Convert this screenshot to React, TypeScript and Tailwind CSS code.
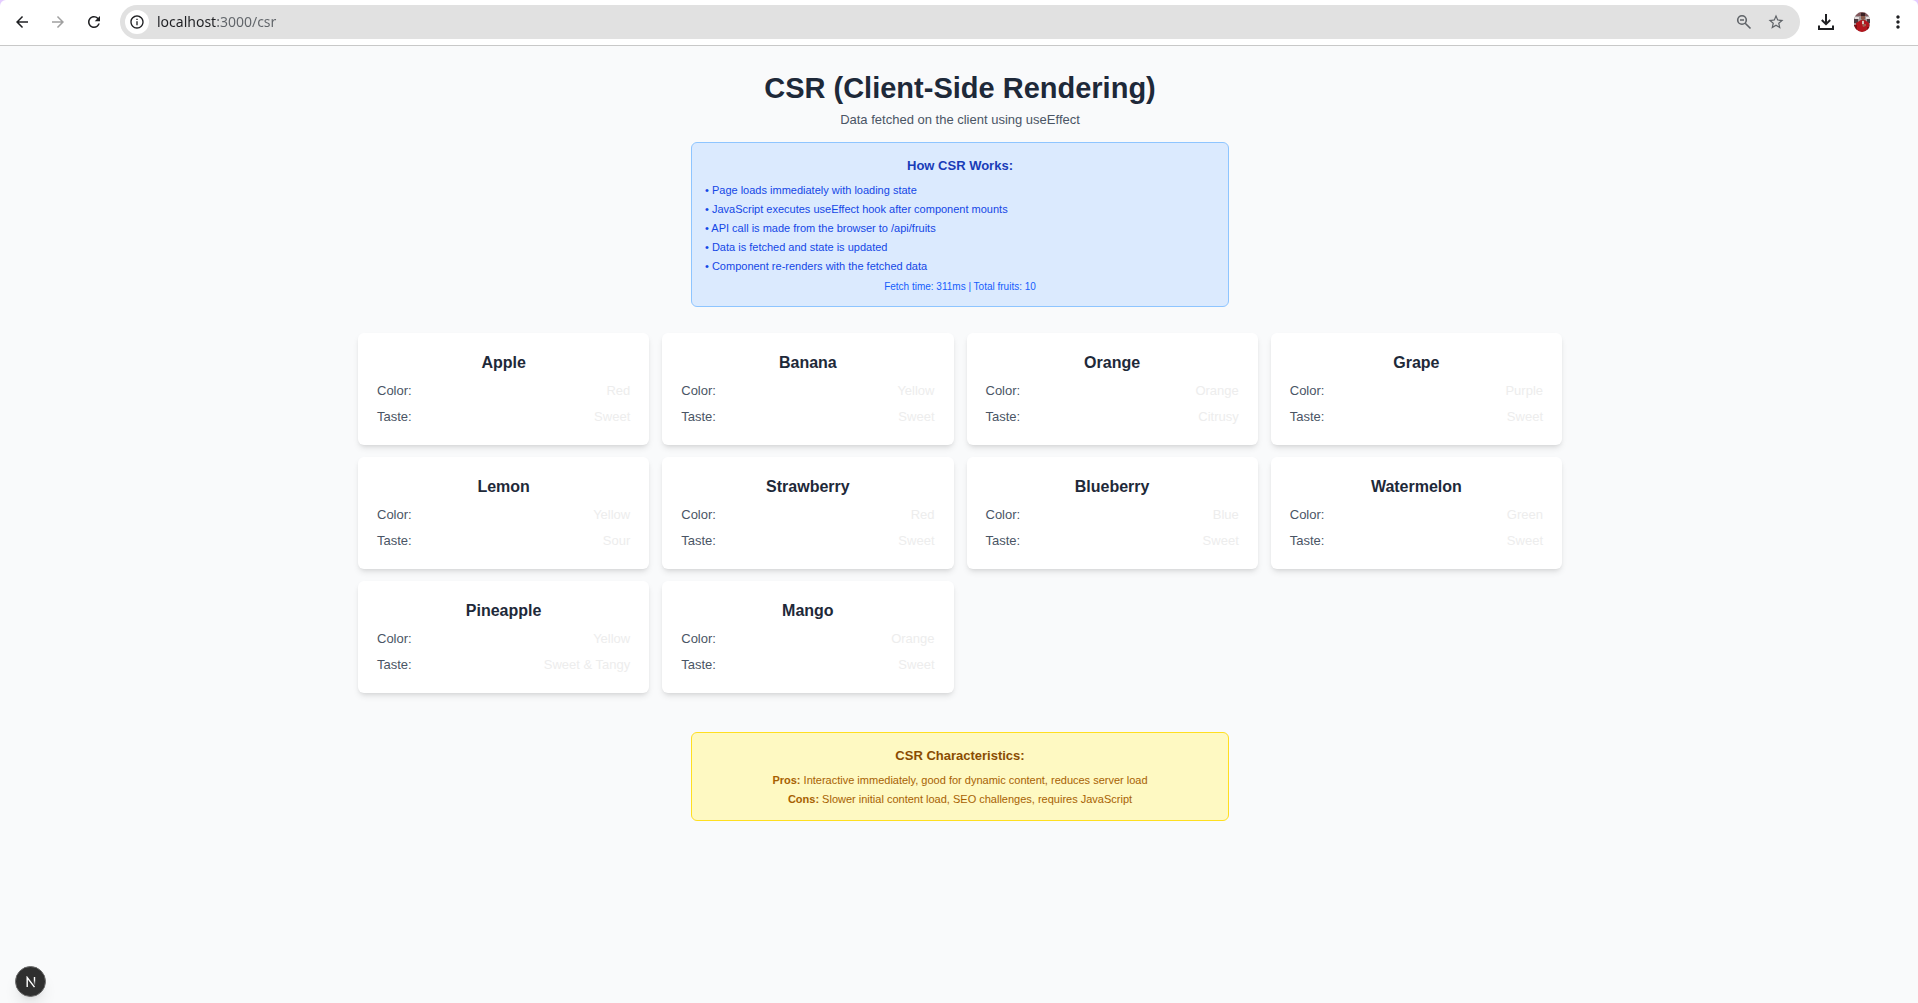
import { useState } from "react";
import {
  MdArrowBack,
  MdArrowForward,
  MdInfoOutline,
  MdMoreVert,
  MdRefresh,
  MdStarBorder,
} from "react-icons/md";

const fruits = [
  { name: "Apple", color: "Red", taste: "Sweet" },
  { name: "Banana", color: "Yellow", taste: "Sweet" },
  { name: "Orange", color: "Orange", taste: "Citrusy" },
  { name: "Grape", color: "Purple", taste: "Sweet" },
  { name: "Lemon", color: "Yellow", taste: "Sour" },
  { name: "Strawberry", color: "Red", taste: "Sweet" },
  { name: "Blueberry", color: "Blue", taste: "Sweet" },
  { name: "Watermelon", color: "Green", taste: "Sweet" },
  { name: "Pineapple", color: "Yellow", taste: "Sweet & Tangy" },
  { name: "Mango", color: "Orange", taste: "Sweet" },
];

const steps = [
  "Page loads immediately with loading state",
  "JavaScript executes useEffect hook after component mounts",
  "API call is made from the browser to /api/fruits",
  "Data is fetched and state is updated",
  "Component re-renders with the fetched data",
];

function ZoomOutIcon() {
  return (
    <svg viewBox="0 0 16 16" className="size-4" fill="none" stroke="currentColor" strokeWidth="1.6" aria-hidden="true">
      <circle cx="6" cy="6" r="4.3" />
      <path d="M9.2 9.2 14.5 14.5M4 6h4" />
    </svg>
  );
}

function DownloadIcon() {
  return (
    <svg viewBox="0 0 16 16" className="size-4" fill="none" stroke="currentColor" strokeWidth="2" aria-hidden="true">
      <path d="M8 0v10M3.8 6 8 10.2 12.2 6M1 11.500V15h14v-3.500" />
    </svg>
  );
}

function Avatar() {
  return (
    <svg viewBox="0 0 16 20" className="h-5 w-4" aria-hidden="true">
      <defs>
        <clipPath id="avatar-clip">
          <ellipse cx="8" cy="10" rx="8.4" ry="10" />
        </clipPath>
      </defs>
      <g clipPath="url(#avatar-clip)">
        <path fill="#a39a9c" d="M0 0h16v20H0z" />
        <path fill="#82565a" d="M0 0h16v4H0z" />
        <path fill="#4b3a40" d="M0 7h4v4H0zM13 7h3v4h-3z" />
        <path fill="#e4dcdc" d="M1 5h4v2H1zM12 5h4v2h-4z" />
        <path fill="#b3161d" d="M2 11l5-3h4l4 3 1 9H1z" />
        <path fill="#7c1016" d="M0 13h3v7H0zM13 15h3v5h-3z" />
        <path fill="#8d5a4b" d="M7 3h4v4l-2 2-2-2z" />
        <path fill="#3a2224" d="M7 1h4v3H7z" />
        <path fill="#d8c4bd" d="M8 9h2v3H8z" />
        <path fill="#a05d50" d="M8 12h4v2l-3 1z" />
      </g>
    </svg>
  );
}

function BrowserBar() {
  const [url, setUrl] = useState("localhost:3000/csr");
  return (
    <header className="bg-[#e4ccff]">
      <div className="flex h-[46px] items-center rounded-t-md border-b border-[#c8c8c8] bg-white pr-[10px] pb-[2px] pl-[13px] text-[#1f2023]">
        <nav className="flex items-center gap-[18px]" aria-label="Browser navigation">
          <button type="button" aria-label="Back"><MdArrowBack size={18} /></button>
          <button type="button" aria-label="Forward" className="text-[#a0a0a0]" disabled><MdArrowForward size={18} /></button>
          <button type="button" aria-label="Reload"><MdRefresh size={18} /></button>
        </nav>
        <div className="ml-[17px] flex h-[34px] flex-1 items-center rounded-full bg-[#e1e1e1] pr-[15px] pl-[5px]">
          <button type="button" aria-label="Site information" className="grid size-6 place-items-center rounded-full bg-white">
            <MdInfoOutline size={16} />
          </button>
          <input
            aria-label="Address"
            value={url}
            spellCheck={false}
            onChange={(e) => setUrl(e.target.value)}
            className="ml-2 h-6 min-w-0 flex-1 bg-[linear-gradient(to_right,#1f2023_59px,#5f6368_59px)] bg-clip-text font-['Noto_Sans',sans-serif] text-sm text-transparent caret-black outline-none"
          />
          <div className="flex items-center gap-[15px] text-[#5f6368]">
            <button type="button" aria-label="Zoom"><ZoomOutIcon /></button>
            <button type="button" aria-label="Bookmark this page"><MdStarBorder size={18} /></button>
          </div>
        </div>
        <div className="ml-[18px] flex items-center">
          <button type="button" aria-label="Downloads"><DownloadIcon /></button>
          <button type="button" aria-label="Profile" className="ml-5"><Avatar /></button>
          <button type="button" aria-label="Menu" className="ml-[18px]"><MdMoreVert size={20} /></button>
        </div>
      </div>
    </header>
  );
}

function FruitCard({ name, color, taste }: { name: string; color: string; taste: string }) {
  return (
    <article className="rounded-md bg-white p-[19px] text-[13px] leading-[19px] shadow-md">
      <h2 className="text-center text-base leading-[22px] font-bold text-gray-800">{name}</h2>
      <dl className="mt-[7px] flex flex-col gap-[7px] text-[#ededed]">
        <div className="flex justify-between">
          <dt className="text-gray-600">Color:</dt>
          <dd>{color}</dd>
        </div>
        <div className="flex justify-between">
          <dt className="text-gray-600">Taste:</dt>
          <dd>{taste}</dd>
        </div>
      </dl>
    </article>
  );
}

export default function App() {
  return (
    <div className="flex min-h-screen flex-col bg-gray-50 font-['Liberation_Sans',Arial,sans-serif]">
      <BrowserBar />
      <main className="mx-auto w-full max-w-[1232px] flex-1 py-[26px] pr-[13px] pl-[15px]">
        <div className="text-center">
          <h1 className="text-[29px] leading-8 font-bold text-gray-800">CSR (Client-Side Rendering)</h1>
          <p className="mt-[6px] text-[13px] leading-[19px] text-gray-600">Data fetched on the client using useEffect</p>
          <section className="mx-auto mt-[13px] max-w-[538px] rounded-md border border-blue-300 bg-blue-100 p-[13px]">
            <h2 className="text-[13px] leading-[19px] font-bold text-blue-800">How CSR Works:</h2>
            <ul className="mt-[7px] flex flex-col gap-[3px] text-left text-[11px] leading-4 text-blue-700">
              {steps.map((step) => (
                <li key={step}>• {step}</li>
              ))}
            </ul>
            <p className="mt-[6px] text-[10px] leading-[13px] text-blue-600">Fetch time: 311ms | Total fruits: 10</p>
          </section>
        </div>

        <div className="mt-[26px] grid grid-cols-1 gap-x-[13px] gap-y-3 sm:grid-cols-2 lg:grid-cols-4">
          {fruits.map((fruit) => (
            <FruitCard key={fruit.name} {...fruit} />
          ))}
        </div>

        <section className="mx-auto mt-[39px] max-w-[538px] rounded-md border border-yellow-300 bg-yellow-100 p-[13px] text-center">
          <h2 className="text-[13px] leading-[19px] font-bold text-yellow-800">CSR Characteristics:</h2>
          <div className="mt-[7px] flex flex-col gap-[3px] text-[11px] leading-4 text-yellow-700">
            <p><strong>Pros:</strong> Interactive immediately, good for dynamic content, reduces server load</p>
            <p><strong>Cons:</strong> Slower initial content load, SEO challenges, requires JavaScript</p>
          </div>
        </section>
      </main>

      <button
        type="button"
        aria-label="Open Next.js Dev Tools"
        className="fixed bottom-[6px] left-[15px] grid size-[31px] place-items-center rounded-full border border-[#6a6a6a] bg-[#2f2f2f] shadow-lg"
      >
        <svg viewBox="0 0 12 12" className="size-3" fill="none" strokeWidth="1.4" aria-hidden="true">
          <defs>
            <linearGradient id="stem" x1="0" y1="0" x2="0" y2="1">
              <stop offset="0.4" stopColor="#fff" />
              <stop offset="1" stopColor="#fff" stopOpacity="0.1" />
            </linearGradient>
          </defs>
          <path stroke="#fff" d="M2.200 11V1.500L9.500 11.200" />
          <path fill="url(#stem)" d="M8.800 1h1.400v8H8.800z" />
        </svg>
      </button>
    </div>
  );
}
